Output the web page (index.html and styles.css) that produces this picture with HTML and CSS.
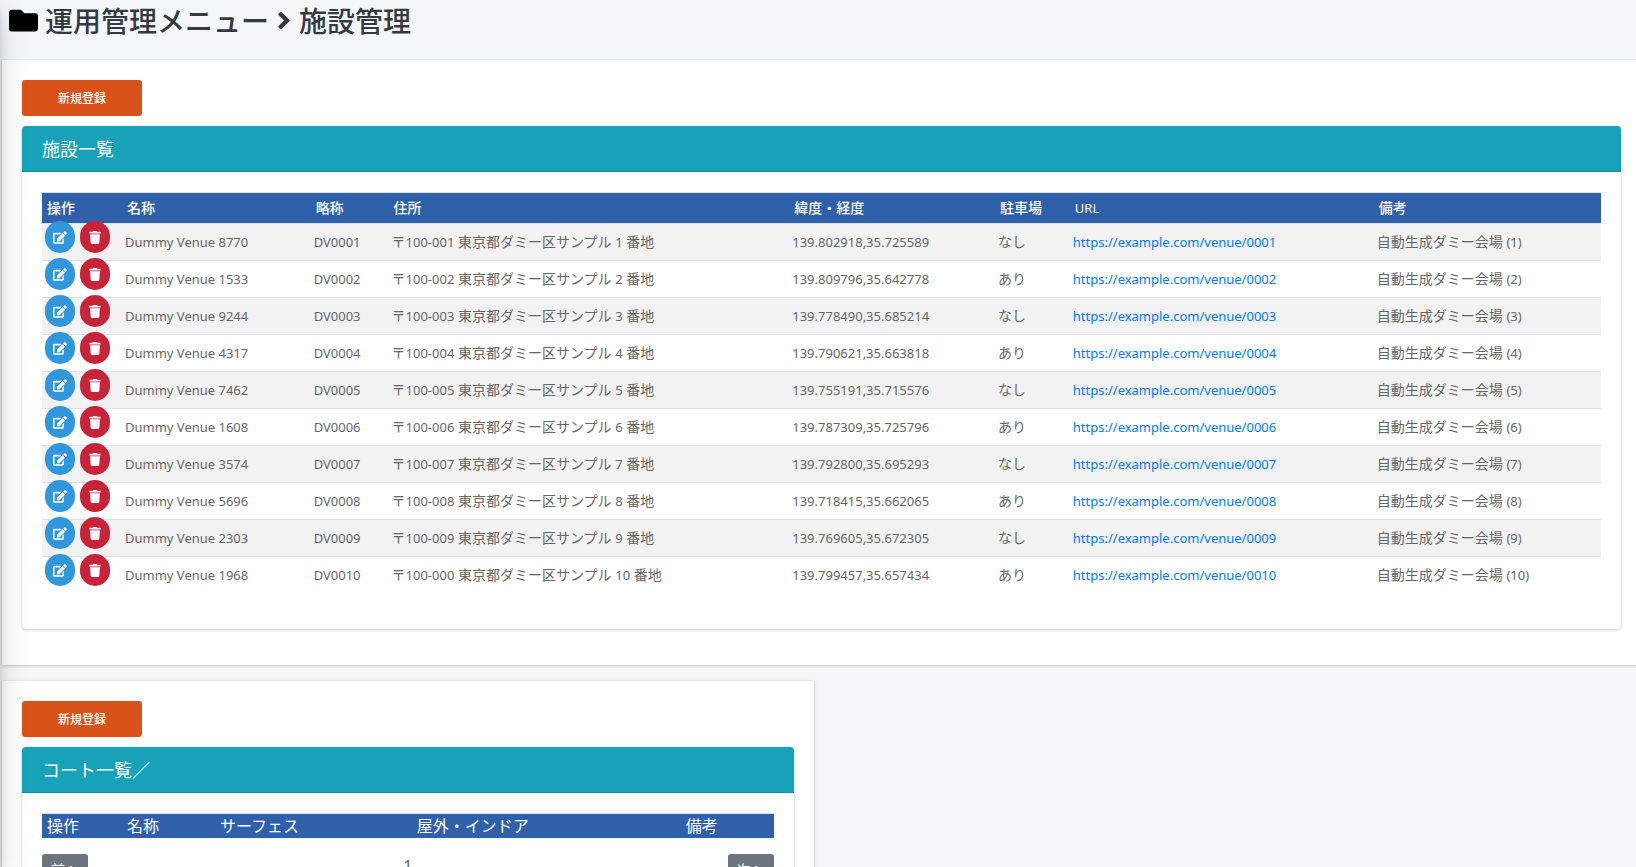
FILE: index.html
```html
<!DOCTYPE html>
<html lang="ja">

<head>
    <meta charset="UTF-8">
    <meta name="viewport" content="width=device-width, initial-scale=1.0">
    <title>施設管理</title>
    <link rel="stylesheet" href="styles.css">
</head>

<body>

    <!-- Icon definitions -->
    <svg class="icon-defs" aria-hidden="true">
        <symbol id="icon-edit" viewBox="0 0 576 512">
            <path d="M402.6 83.2l90.2 90.2c3.8 3.8 3.8 10 0 13.8L274.4 405.6l-92.8 10.3c-12.4 1.4-22.9-9.1-21.5-21.5l10.3-92.8L388.8 83.2c3.8-3.8 10-3.8 13.8 0zm162-22.9l-48.8-48.8c-15.2-15.2-39.9-15.2-55.2 0l-35.4 35.4c-3.8 3.8-3.8 10 0 13.8l90.2 90.2c3.8 3.8 10 3.8 13.8 0l35.4-35.4c15.2-15.3 15.2-40 0-55.2zM384 346.2V448H64V128h229.8c3.2 0 6.2-1.3 8.5-3.5l40-40c7.6-7.6 2.2-20.5-8.5-20.5H48C21.5 64 0 85.5 0 112v352c0 26.5 21.5 48 48 48h352c26.5 0 48-21.5 48-48V306.2c0-10.7-12.9-16-20.5-8.5l-40 40c-2.2 2.3-3.5 5.3-3.5 8.5z" />
        </symbol>
        <symbol id="icon-trash" viewBox="0 0 448 512">
            <path d="M432 32H312l-9.4-18.7A24 24 0 0 0 281.1 0H166.8a23.7 23.7 0 0 0-21.4 13.3L136 32H16A16 16 0 0 0 0 48v32a16 16 0 0 0 16 16h416a16 16 0 0 0 16-16V48a16 16 0 0 0-16-16zM53.2 467a48 48 0 0 0 47.9 45h245.8a48 48 0 0 0 47.9-45L416 128H32z" />
        </symbol>
    </svg>

    <header class="page-header">
        <h1>
            <svg class="icon-folder" viewBox="0 0 512 512" aria-hidden="true">
                <path d="M464 128H272l-64-64H48C21.5 64 0 85.5 0 112v288c0 26.5 21.5 48 48 48h416c26.5 0 48-21.5 48-48V176c0-26.500-21.500-48-48-48z" />
            </svg>
            <span>運用管理メニュー</span>
            <svg class="icon-angle" viewBox="0 64 256 384" aria-hidden="true">
                <path d="M224.300 273l-136 136c-9.400 9.400-24.600 9.400-33.900 0l-22.600-22.600c-9.400-9.400-9.400-24.600 0-33.900l96.400-96.400-96.400-96.400c-9.400-9.400-9.400-24.600 0-33.900L54.300 103c9.400-9.400 24.600-9.400 33.900 0l136 136c9.500 9.400 9.500 24.600.1 34z" />
            </svg>
            <span>施設管理</span>
        </h1>
    </header>

    <main class="content">
        <section class="panel panel-wide">
            <button type="button" class="btn-new">新規登録</button>
            <div class="card">
                <h2 class="card-header">施設一覧</h2>
                <div class="card-body">
                    <table class="list venues">
                        <colgroup>
                            <col class="col-action">
                            <col class="col-name">
                            <col class="col-short">
                            <col class="col-address">
                            <col class="col-position">
                            <col class="col-parking">
                            <col class="col-url">
                            <col>
                        </colgroup>
                        <thead>
                            <tr>
                                <th>操作</th>
                                <th>名称</th>
                                <th>略称</th>
                                <th>住所</th>
                                <th>緯度・経度</th>
                                <th>駐車場</th>
                                <th class="latin">URL</th>
                                <th>備考</th>
                            </tr>
                        </thead>
                        <tbody>
                            <tr>
                                <td class="actions"><button type="button" class="edit" aria-label="編集"><svg><use href="#icon-edit" /></svg></button><button type="button" class="delete" aria-label="削除"><svg><use href="#icon-trash" /></svg></button></td>
                                <td class="latin">Dummy Venue 8770</td>
                                <td class="latin">DV0001</td>
                                <td>〒<span class="latin">100-001</span> 東京都ダミー区サンプル <span class="latin">1</span> 番地</td>
                                <td class="latin">139.802918,35.725589</td>
                                <td>なし</td>
                                <td class="latin"><a href="https://example.com/venue/0001">https://example.com/venue/0001</a></td>
                                <td>自動生成ダミー会場 <span class="latin">(1)</span></td>
                            </tr>
                            <tr>
                                <td class="actions"><button type="button" class="edit" aria-label="編集"><svg><use href="#icon-edit" /></svg></button><button type="button" class="delete" aria-label="削除"><svg><use href="#icon-trash" /></svg></button></td>
                                <td class="latin">Dummy Venue 1533</td>
                                <td class="latin">DV0002</td>
                                <td>〒<span class="latin">100-002</span> 東京都ダミー区サンプル <span class="latin">2</span> 番地</td>
                                <td class="latin">139.809796,35.642778</td>
                                <td>あり</td>
                                <td class="latin"><a href="https://example.com/venue/0002">https://example.com/venue/0002</a></td>
                                <td>自動生成ダミー会場 <span class="latin">(2)</span></td>
                            </tr>
                            <tr>
                                <td class="actions"><button type="button" class="edit" aria-label="編集"><svg><use href="#icon-edit" /></svg></button><button type="button" class="delete" aria-label="削除"><svg><use href="#icon-trash" /></svg></button></td>
                                <td class="latin">Dummy Venue 9244</td>
                                <td class="latin">DV0003</td>
                                <td>〒<span class="latin">100-003</span> 東京都ダミー区サンプル <span class="latin">3</span> 番地</td>
                                <td class="latin">139.778490,35.685214</td>
                                <td>なし</td>
                                <td class="latin"><a href="https://example.com/venue/0003">https://example.com/venue/0003</a></td>
                                <td>自動生成ダミー会場 <span class="latin">(3)</span></td>
                            </tr>
                            <tr>
                                <td class="actions"><button type="button" class="edit" aria-label="編集"><svg><use href="#icon-edit" /></svg></button><button type="button" class="delete" aria-label="削除"><svg><use href="#icon-trash" /></svg></button></td>
                                <td class="latin">Dummy Venue 4317</td>
                                <td class="latin">DV0004</td>
                                <td>〒<span class="latin">100-004</span> 東京都ダミー区サンプル <span class="latin">4</span> 番地</td>
                                <td class="latin">139.790621,35.663818</td>
                                <td>あり</td>
                                <td class="latin"><a href="https://example.com/venue/0004">https://example.com/venue/0004</a></td>
                                <td>自動生成ダミー会場 <span class="latin">(4)</span></td>
                            </tr>
                            <tr>
                                <td class="actions"><button type="button" class="edit" aria-label="編集"><svg><use href="#icon-edit" /></svg></button><button type="button" class="delete" aria-label="削除"><svg><use href="#icon-trash" /></svg></button></td>
                                <td class="latin">Dummy Venue 7462</td>
                                <td class="latin">DV0005</td>
                                <td>〒<span class="latin">100-005</span> 東京都ダミー区サンプル <span class="latin">5</span> 番地</td>
                                <td class="latin">139.755191,35.715576</td>
                                <td>なし</td>
                                <td class="latin"><a href="https://example.com/venue/0005">https://example.com/venue/0005</a></td>
                                <td>自動生成ダミー会場 <span class="latin">(5)</span></td>
                            </tr>
                            <tr>
                                <td class="actions"><button type="button" class="edit" aria-label="編集"><svg><use href="#icon-edit" /></svg></button><button type="button" class="delete" aria-label="削除"><svg><use href="#icon-trash" /></svg></button></td>
                                <td class="latin">Dummy Venue 1608</td>
                                <td class="latin">DV0006</td>
                                <td>〒<span class="latin">100-006</span> 東京都ダミー区サンプル <span class="latin">6</span> 番地</td>
                                <td class="latin">139.787309,35.725796</td>
                                <td>あり</td>
                                <td class="latin"><a href="https://example.com/venue/0006">https://example.com/venue/0006</a></td>
                                <td>自動生成ダミー会場 <span class="latin">(6)</span></td>
                            </tr>
                            <tr>
                                <td class="actions"><button type="button" class="edit" aria-label="編集"><svg><use href="#icon-edit" /></svg></button><button type="button" class="delete" aria-label="削除"><svg><use href="#icon-trash" /></svg></button></td>
                                <td class="latin">Dummy Venue 3574</td>
                                <td class="latin">DV0007</td>
                                <td>〒<span class="latin">100-007</span> 東京都ダミー区サンプル <span class="latin">7</span> 番地</td>
                                <td class="latin">139.792800,35.695293</td>
                                <td>なし</td>
                                <td class="latin"><a href="https://example.com/venue/0007">https://example.com/venue/0007</a></td>
                                <td>自動生成ダミー会場 <span class="latin">(7)</span></td>
                            </tr>
                            <tr>
                                <td class="actions"><button type="button" class="edit" aria-label="編集"><svg><use href="#icon-edit" /></svg></button><button type="button" class="delete" aria-label="削除"><svg><use href="#icon-trash" /></svg></button></td>
                                <td class="latin">Dummy Venue 5696</td>
                                <td class="latin">DV0008</td>
                                <td>〒<span class="latin">100-008</span> 東京都ダミー区サンプル <span class="latin">8</span> 番地</td>
                                <td class="latin">139.718415,35.662065</td>
                                <td>あり</td>
                                <td class="latin"><a href="https://example.com/venue/0008">https://example.com/venue/0008</a></td>
                                <td>自動生成ダミー会場 <span class="latin">(8)</span></td>
                            </tr>
                            <tr>
                                <td class="actions"><button type="button" class="edit" aria-label="編集"><svg><use href="#icon-edit" /></svg></button><button type="button" class="delete" aria-label="削除"><svg><use href="#icon-trash" /></svg></button></td>
                                <td class="latin">Dummy Venue 2303</td>
                                <td class="latin">DV0009</td>
                                <td>〒<span class="latin">100-009</span> 東京都ダミー区サンプル <span class="latin">9</span> 番地</td>
                                <td class="latin">139.769605,35.672305</td>
                                <td>なし</td>
                                <td class="latin"><a href="https://example.com/venue/0009">https://example.com/venue/0009</a></td>
                                <td>自動生成ダミー会場 <span class="latin">(9)</span></td>
                            </tr>
                            <tr>
                                <td class="actions"><button type="button" class="edit" aria-label="編集"><svg><use href="#icon-edit" /></svg></button><button type="button" class="delete" aria-label="削除"><svg><use href="#icon-trash" /></svg></button></td>
                                <td class="latin">Dummy Venue 1968</td>
                                <td class="latin">DV0010</td>
                                <td>〒<span class="latin">100-000</span> 東京都ダミー区サンプル <span class="latin">10</span> 番地</td>
                                <td class="latin">139.799457,35.657434</td>
                                <td>あり</td>
                                <td class="latin"><a href="https://example.com/venue/0010">https://example.com/venue/0010</a></td>
                                <td>自動生成ダミー会場 <span class="latin">(10)</span></td>
                            </tr>
                        </tbody>
                    </table>
                </div>
            </div>
        </section>

        <section class="panel">
            <button type="button" class="btn-new">新規登録</button>
            <div class="card">
                <h2 class="card-header">コート一覧／</h2>
                <div class="card-body">
                    <table class="list courts">
                        <colgroup>
                            <col class="col-action">
                            <col class="col-court">
                            <col class="col-surface">
                            <col class="col-indoor">
                            <col>
                        </colgroup>
                        <thead>
                            <tr>
                                <th>操作</th>
                                <th>名称</th>
                                <th>サーフェス</th>
                                <th>屋外・インドア</th>
                                <th>備考</th>
                            </tr>
                        </thead>
                    </table>
                    <div class="pager">
                        <button type="button">前へ</button>
                        <span>1</span>
                        <button type="button">次へ</button>
                    </div>
                </div>
            </div>
        </section>
    </main>

</body>

</html>
```
FILE: styles.css
```css
/* Reset Styles */
* {
    box-sizing: border-box;
    margin: 0;
    padding: 0;
}

/* Body Styles */
body {
    min-height: 100vh;
    overflow-x: hidden;
    background-color: #f4f6f9;
    color: #666;
    font-family: "Noto Sans", "Noto Sans CJK JP", sans-serif;
    font-size: 16px;
    line-height: 24px;
}

/* Shadow of the collapsed sidebar */
body::before {
    content: "";
    position: fixed;
    top: 0;
    bottom: 0;
    left: -254px;
    width: 250px;
    box-shadow: 0 14px 28px rgba(0, 0, 0, 0.25), 0 10px 10px rgba(0, 0, 0, 0.22);
    pointer-events: none;
    z-index: 10;
}

button {
    border: none;
    font-family: inherit;
    cursor: pointer;
}

a {
    color: #007bff;
    text-decoration: none;
}

a:hover {
    text-decoration: underline;
}

.icon-defs {
    display: none;
}

/* Page Header */
.page-header {
    height: 60px;
    padding: 0 9px;
}

.page-header h1 {
    display: flex;
    align-items: center;
    color: #343a40;
    font-family: "Noto Sans CJK JP", sans-serif;
    font-size: 28px;
    font-weight: 500;
    line-height: 40px;
}

.icon-folder {
    width: 29px;
    height: 29px;
    margin-right: 7px;
    fill: #000;
}

.icon-angle {
    width: 14px;
    height: 21px;
    margin: 0 8px;
    fill: #343a40;
}

/* Panels, the wide one runs past the right edge */
.content {
    display: grid;
    grid-template-columns: 1fr 1fr;
    gap: 16px;
    margin: 0 -5px 16px 2px;
}

.panel {
    padding: 20px 20px 36px;
    background-color: #fff;
    box-shadow: 0 0 1px rgba(0, 0, 0, 0.125), 0 1px 3px rgba(0, 0, 0, 0.2);
}

.panel-wide {
    grid-column: span 2;
}

.btn-new {
    display: block;
    width: 120px;
    height: 36px;
    margin-bottom: 10px;
    border-radius: 3px;
    background-color: #d95219;
    color: #fff;
    font-size: 12px;
    font-weight: 500;
}

/* Card Styles */
.card {
    border-radius: 4px;
    background-color: #fff;
    box-shadow: 0 0 1px rgba(0, 0, 0, 0.125), 0 1px 3px rgba(0, 0, 0, 0.2);
}

.card-header {
    padding: 10px 20px 11px;
    border-bottom: 1px solid #148a9c;
    border-radius: 4px 4px 0 0;
    background-color: #17a2b8;
    color: #fff;
    font-family: "Noto Sans CJK JP", sans-serif;
    font-size: 18px;
    font-weight: 400;
}

.card-body {
    padding: 20px 20px 36px;
}

/* List Tables */
.list {
    width: 100%;
    table-layout: fixed;
    border-spacing: 0;
    font-size: 14px;
    line-height: 20px;
}

.list th {
    padding: 5px;
    border-top: 1px solid #dee2e6;
    background-color: #3060aa;
    color: #fff;
    font-weight: 500;
    text-align: left;
}

.list td {
    height: 37px;
    padding: 0 3px;
    border-top: 1px solid #dee2e6;
    white-space: nowrap;
}

.list tbody tr:nth-child(odd) {
    background-color: #f2f2f2;
}

.list .latin {
    font-size: 13px;
}

.list th.latin {
    font-weight: 400;
}

.courts th {
    padding: 0 5px;
    font-size: 16px;
    font-weight: 400;
    line-height: 24px;
}

/* Column widths */
.col-action { width: 80px; }
.col-name { width: 12.1%; }
.col-short { width: 5%; }
.col-address { width: 25.7%; }
.col-position { width: 13.2%; }
.col-parking { width: 4.8%; }
.col-url { width: 19.5%; }
.col-court { width: 12.7%; }
.col-surface { width: 26.9%; }
.col-indoor { width: 36.8%; }

/* Row Buttons */
.list .actions {
    font-size: 0;
    vertical-align: top;
}

.actions button {
    display: inline-flex;
    justify-content: center;
    align-items: center;
    width: 30px;
    height: 32px;
    margin-top: -3px;
    border-radius: 15px;
    color: #fff;
    vertical-align: top;
}

.actions button + button {
    margin-left: 5px;
}

.actions svg {
    width: 14px;
    height: 13px;
    fill: currentColor;
}

.edit {
    background-color: #3097dc;
}

.delete {
    background-color: #c82439;
}

/* Pager */
.pager {
    display: flex;
    justify-content: space-between;
    align-items: flex-start;
    margin-top: 16px;
}

.pager button {
    padding: 5px 9px;
    border-radius: 3px;
    background-color: #6c757d;
    color: #fff;
    font-size: 14px;
    line-height: 21px;
}
```
